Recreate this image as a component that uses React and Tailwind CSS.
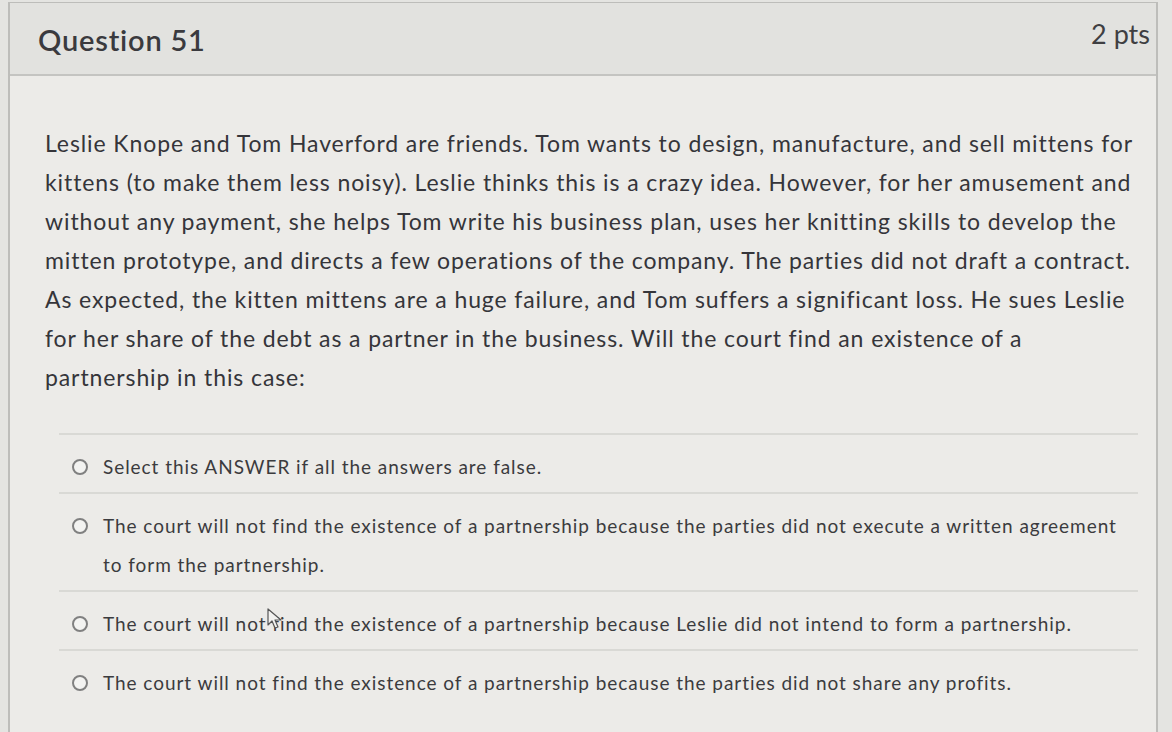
import React from "react";

const answers = [
  ["Select this ANSWER if all the answers are false."],
  [
    "The court will not find the existence of a partnership because the parties did not execute a written agreement",
    "to form the partnership.",
  ],
  ["The court will not find the existence of a partnership because Leslie did not intend to form a partnership."],
  ["The court will not find the existence of a partnership because the parties did not share any profits."],
];

const lines = [
  "Leslie Knope and Tom Haverford are friends. Tom wants to design, manufacture, and sell mittens for",
  "kittens (to make them less noisy). Leslie thinks this is a crazy idea. However, for her amusement and",
  "without any payment, she helps Tom write his business plan, uses her knitting skills to develop the",
  "mitten prototype, and directs a few operations of the company. The parties did not draft a contract.",
  "As expected, the kitten mittens are a huge failure, and Tom suffers a significant loss. He sues Leslie",
  "for her share of the debt as a partner in the business. Will the court find an existence of a",
  "partnership in this case:",
];

const Cursor = () => (
  <svg className="absolute left-[164px] top-[4px]" width="16" height="22" viewBox="0 0 16 22">
    <path d="M1 1 L1 17 L5 13 L8 20 L11 19 L8 12 L14 12 Z" fill="#f2f2f0" stroke="#555" strokeWidth="1.2" strokeLinejoin="round" />
  </svg>
);

export default function App() {
  return (
    <div className="w-[1172px] h-[732px] overflow-hidden bg-[#e4e4e1] pl-[8px] pr-[14px] pt-[2px] font-['Lato','Liberation_Sans',sans-serif]">
      <div className="h-full border-l-2 border-r-2 border-t border-[#bdbdba]">
        {/* header */}
        <div className="h-[73px] bg-[#e2e2df] border-b-2 border-[#c4c4c1] flex items-start justify-between pl-[28px] pr-[6px]">
          <h2 className="text-[29px] leading-[29px] tracking-[0.8px] font-semibold text-[#3a3a3e] mt-[22px]">Question 51</h2>
          <span className="text-[27px] leading-[27px] text-[#3f3f42] mt-[17px]">2 pts</span>
        </div>

        {/* body */}
        <div className="bg-[#ecebe8] h-full pt-[48px]">
          <p className="pl-[35px] text-[23px] leading-[39px] tracking-[0.9px] text-[#35353a] whitespace-nowrap">
            {lines.map((l, i) => (
              <React.Fragment key={i}>
                {l}
                <br />
              </React.Fragment>
            ))}
          </p>

          <div className="ml-[49px] mr-[18px] mt-[36px]">
            {answers.map((a, i) => (
              <div key={i} className="border-t-2 border-[#d9d9d5] pt-[12px] pb-[6px] pl-[13px] flex items-start gap-[15px]">
                <span className="mt-[12px] w-[16px] h-[16px] rounded-full border-2 border-[#808080] bg-[#f3f3f1] shrink-0" />
                <div className="relative text-[19px] leading-[39px] tracking-[0.95px] text-[#3b3b3e] whitespace-nowrap">
                  {a.map((t, j) => (
                    <div key={j}>{t}</div>
                  ))}
                  {i === 2 && <Cursor />}
                </div>
              </div>
            ))}
          </div>
        </div>
      </div>
    </div>
  );
}
